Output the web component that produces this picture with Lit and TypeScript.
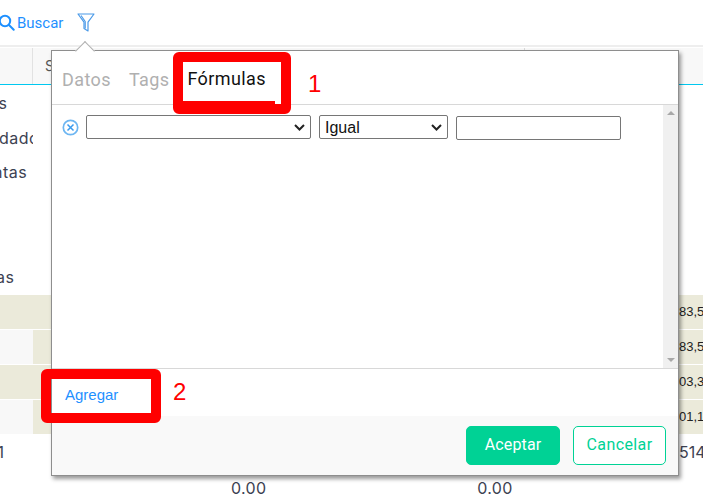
import { LitElement, html, css } from "lit";
import { customElement } from "lit/decorators.js";

@customElement("app-root")
export class AppRoot extends LitElement {
  static styles = css`
    :host {
      display: block;
      position: relative;
      width: 703px;
      height: 503px;
      overflow: hidden;
      background: #fff;
      font-family: "Roboto", sans-serif;
    }
    .page { display: flex; flex-direction: column; height: 503px; }
    .toolbar {
      height: 45px;
      box-sizing: border-box;
      display: flex;
      align-items: center;
      gap: 14px;
      color: #1e90ff;
      font-size: 15px;
      flex: none;
    }
    .search { display: flex; align-items: center; gap: 2px; margin-left: -2px; }
    .funnel { margin-top: -1px; }
    .rule { height: 2px; background: #eee; flex: none; }
    .thead {
      margin-top: 1px;
      height: 36px;
      flex: none;
      display: flex;
      background: #f8f8f8;
      border-bottom: 1px solid #00c8f0;
      font-family: "Inter", sans-serif;
      font-size: 14px;
      color: #555;
    }
    .th { width: 32px; border-right: 1px solid #e2e2e2; flex: none; }
    .th2 { width: 479px; padding: 9px 0 0 12px; border-right: 1px solid #d8d8d8; flex: none; }
    .list {
      font-family: "Inter", sans-serif;
      font-size: 16px;
      letter-spacing: 0.5px;
      color: #3c4252;
      display: flex;
      flex-direction: column;
      flex: none;
      height: 210px;
    }
    .li { height: 34.5px; line-height: 34.5px; white-space: nowrap; overflow: hidden; width: 33px; }
    .li.a { margin-top: 1px; text-indent: -11px; }
    .li.b { text-indent: -1px; }
    .li.c { text-indent: -7px; height: 105px; }
    .li.d { text-indent: -4px; }
    .rows { display: flex; flex-direction: column; gap: 1px; flex: none; }
    .row { height: 34px; display: flex; background: #ebeada; }
    .row.alt { background: linear-gradient(to right, #f8f8f8 33px, #ebeada 33px); }
    .num {
      margin-left: auto;
      width: 24px;
      overflow: hidden;
      font: 13px/34px "Liberation Sans", sans-serif;
      color: #222;
    }
    .totals {
      flex: none;
      display: flex;
      justify-content: space-between;
      font-family: "Inter", sans-serif;
      font-size: 16px;
      color: #3c4252;
      height: 36px;
      line-height: 36px;
    }
    .totals span:first-child { text-indent: -9px; overflow: hidden; width: 4px; }
    .totals span:last-child { width: 24px; overflow: hidden; white-space: nowrap; }
    .zeros {
      flex: none;
      margin-top: 8px;
      display: flex;
      font-family: "Inter", sans-serif;
      font-size: 16px;
      letter-spacing: 0.3px;
      color: #3c4252;
      padding-left: 231px;
      gap: 211px;
    }

    .pop {
      position: absolute;
      left: 51px;
      top: 50px;
      width: 628px;
      height: 426px;
      box-sizing: border-box;
      background: #fff;
      border: 1px solid #8e8e8e;
      box-shadow: 2px 3px 4px rgba(0, 0, 0, 0.4);
      display: flex;
      flex-direction: column;
    }
    .arrow {
      position: absolute;
      left: 26px;
      top: -7px;
      width: 13px;
      height: 13px;
      background: #fff;
      border-left: 1px solid #b0b0b0;
      border-top: 1px solid #b0b0b0;
      transform: rotate(45deg);
    }
    .tabs {
      height: 54px;
      flex: none;
      box-sizing: border-box;
      display: flex;
      gap: 18px;
      padding: 18px 0 0 10px;
      font-size: 18px;
      line-height: 22px;
      color: #b0b0b0;
      letter-spacing: 0.4px;
      border-bottom: 1px solid #d8d8d8;
    }
    .tab.on { color: #111; position: relative; z-index: 3; top: -1px; }
    .body { flex: 1; display: flex; min-height: 0; }
    .fields { flex: 1; display: flex; align-items: flex-start; padding: 10px 0 0 10px; }
    .del { margin: 4px 7px 0 0; flex: none; }
    select, input {
      box-sizing: border-box;
      background: #fff;
      border: 1px solid #767676;
      border-radius: 2px;
      font: 16px "Liberation Sans", sans-serif;
      color: #111;
      height: 24px;
      padding: 0;
      margin: 0;
    }
    select {
      appearance: none;
      -webkit-appearance: none;
      padding-left: 5px;
      background-repeat: no-repeat;
      background-position: right 5px center;
      background-size: 11px 7px;
      background-image: url("data:image/svg+xml,%3Csvg xmlns='http://www.w3.org/2000/svg' viewBox='0 0 11 7'%3E%3Cpath d='M1 1l4.5 4.5L10 1' fill='none' stroke='%23222' stroke-width='2'/%3E%3C/svg%3E");
    }
    .s1 { width: 225px; }
    .s2 { width: 129px; margin-left: 8px; }
    .in { width: 165px; margin-left: 8px; margin-top: 1px; }
    .scroll {
      width: 15px;
      flex: none;
      background: #f0f0f0;
      display: flex;
      flex-direction: column;
      justify-content: space-between;
      align-items: center;
      padding: 6px 0;
      box-sizing: border-box;
    }
    .tri-u { width: 0; height: 0; border: 4px solid transparent; border-top: 0; border-bottom: 4px solid #a8a8a8; }
    .tri-d { width: 0; height: 0; border: 4px solid transparent; border-bottom: 0; border-top: 4px solid #a8a8a8; }
    .add {
      flex: none;
      height: 48px;
      box-sizing: border-box;
      border-top: 1px solid #d8d8d8;
      padding: 17px 0 0 13px;
      font: 15px/18px "Liberation Sans", sans-serif;
      color: #1e90ff;
    }
    .foot {
      flex: none;
      height: 59px;
      box-sizing: border-box;
      background: #f9f9f9;
      display: flex;
      justify-content: flex-end;
      gap: 13px;
      padding: 10px 12px 0 0;
    }
    .btn {
      height: 39px;
      box-sizing: border-box;
      border-radius: 5px;
      font: 16px/35px "Roboto", sans-serif;
      letter-spacing: 0.4px;
      text-align: center;
      border: 1px solid #00d295;
    }
    .ok { width: 94px; background: #00d295; color: #fff; letter-spacing: 0.15px; }
    .no { width: 93px; background: #fff; color: #00d295; }

    .mark {
      position: absolute;
      box-sizing: border-box;
      border: 10px solid #f00;
      border-radius: 6px;
    }
    .m1 { left: 173px; top: 52px; width: 118px; height: 62px; border-bottom-width: 13px; }
    .m1::after {
      content: "";
      position: absolute;
      right: 0;
      bottom: -3px;
      width: 6px;
      height: 3px;
      background: #fff;
    }
    .m2 { left: 41px; top: 369px; width: 120px; height: 54px; }
    .lab {
      position: absolute;
      color: #f00;
      font: 24px/28px "Liberation Sans", sans-serif;
    }
    .l1 { left: 308px; top: 70px; }
    .l2 { left: 173px; top: 378px; }
  `;

  render() {
    return html`
      <div class="page">
        <div class="toolbar">
          <span class="search">
            <svg width="17" height="17" viewBox="0 0 17 17" fill="none" stroke="#1e90ff" stroke-width="2">
              <circle cx="7" cy="7" r="5.2"></circle>
              <path d="M11 11l4.7 4.7" stroke-linecap="round"></path>
            </svg>
            Buscar
          </span>
          <svg class="funnel" width="18" height="19" viewBox="0 0 18 19" fill="none" stroke="#4b9ae8" stroke-width="1.2" stroke-linejoin="round">
            <path d="M1 1h16l-6 8.2v8.8l-4-2.5V9.2z"></path>
            <path d="M4 2.5l4.2 6v7"></path>
          </svg>
        </div>
        <div class="rule"></div>
        <div class="thead">
          <div class="th"></div>
          <div class="th2">S</div>
        </div>
        <div class="list">
          <div class="li a">as</div>
          <div class="li b">dado</div>
          <div class="li c">ntas</div>
          <div class="li d">as</div>
        </div>
        <div class="rows">
          <div class="row"><span class="num">83,5</span></div>
          <div class="row alt"><span class="num">83,5</span></div>
          <div class="row"><span class="num">03,3</span></div>
          <div class="row alt"><span class="num">01,1</span></div>
        </div>
        <div class="totals"><span>11</span><span>514</span></div>
        <div class="zeros"><span>0.00</span><span>0.00</span></div>
      </div>

      <div class="pop">
        <div class="arrow"></div>
        <div class="tabs">
          <span class="tab">Datos</span>
          <span class="tab">Tags</span>
          <span class="tab on">Fórmulas</span>
        </div>
        <div class="body">
          <div class="fields">
            <svg class="del" width="17" height="17" viewBox="0 0 17 17" fill="none">
              <circle cx="8.5" cy="8.5" r="7.2" stroke="#6db6f2" stroke-width="1.7"></circle>
              <path d="M5.5 5.5l6 6M11.5 5.5l-6 6" stroke-width="1.5" stroke="#3a9bee"></path>
            </svg>
            <select class="s1"><option></option></select>
            <select class="s2"><option>Igual</option></select>
            <input class="in" />
          </div>
          <div class="scroll"><div class="tri-u"></div><div class="tri-d"></div></div>
        </div>
        <div class="add">Agregar</div>
        <div class="foot">
          <div class="btn ok">Aceptar</div>
          <div class="btn no">Cancelar</div>
        </div>
      </div>

      <div class="mark m1"></div>
      <div class="mark m2"></div>
      <div class="lab l1">1</div>
      <div class="lab l2">2</div>
    `;
  }
}
